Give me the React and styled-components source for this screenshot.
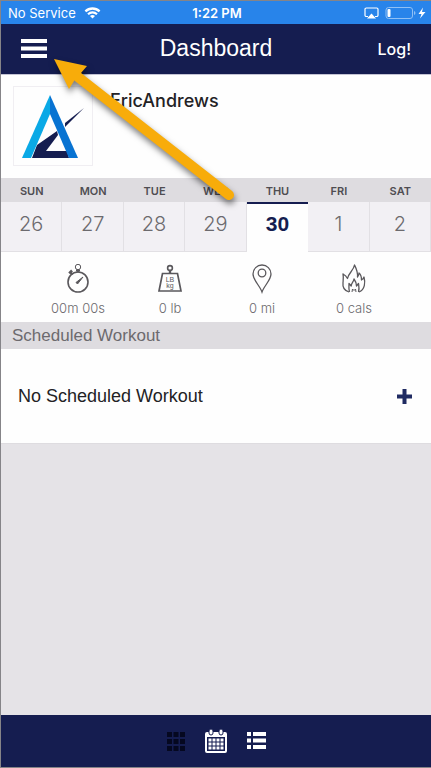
import React from 'react';
import styled, { createGlobalStyle } from 'styled-components';

const colors = {
    navy: '#151d50',
    blue: '#2884ea',
    header: '#dedce0',
    cell: '#f2f0f4',
    page: '#e5e3e7',
    line: '#e2e0e4',
    text: '#6c6a6e',
};

const days = [
    { name: 'SUN', date: 26 },
    { name: 'MON', date: 27 },
    { name: 'TUE', date: 28 },
    { name: 'WED', date: 29 },
    { name: 'THU', date: 30, active: true },
    { name: 'FRI', date: 1 },
    { name: 'SAT', date: 2 },
];

const stats = [
    { label: '00m 00s', Icon: StopwatchIcon },
    { label: '0 lb', Icon: WeightIcon },
    { label: '0 mi', Icon: PinIcon },
    { label: '0 cals', Icon: FlameIcon },
];

export default function App() {
    return (
        <Screen>
            <GlobalStyle />
            <StatusBar>
                <Carrier>
                    No Service
                    <WifiIcon />
                </Carrier>
                <Clock>1:22 PM</Clock>
                <StatusIcons>
                    <AirplayIcon />
                    <BatteryIcon />
                </StatusIcons>
            </StatusBar>
            <NavBar>
                <MenuButton type="button" aria-label="Menu">
                    <MenuIcon />
                </MenuButton>
                <Title>Dashboard</Title>
                <LogButton type="button">Log!</LogButton>
            </NavBar>
            <Profile>
                <Avatar>
                    <Logo />
                </Avatar>
                <UserName>EricAndrews</UserName>
            </Profile>
            <Week>
                {days.map((day) => (
                    <Day key={day.name}>
                        <DayName>{day.name}</DayName>
                        <DateButton type="button" $active={day.active}>
                            {day.date}
                        </DateButton>
                    </Day>
                ))}
            </Week>
            <Stats>
                {stats.map(({ label, Icon }) => (
                    <Stat key={label}>
                        <Icon />
                        {label}
                    </Stat>
                ))}
            </Stats>
            <SectionTitle>Scheduled Workout</SectionTitle>
            <Workout>
                No Scheduled Workout
                <AddButton type="button" aria-label="Add workout">
                    <PlusIcon />
                </AddButton>
            </Workout>
            <TabBar>
                <TabButton type="button" aria-label="Grid">
                    <GridIcon />
                </TabButton>
                <TabButton type="button" aria-label="Calendar">
                    <CalendarIcon />
                </TabButton>
                <TabButton type="button" aria-label="List">
                    <ListIcon />
                </TabButton>
            </TabBar>
            <Pointer />
        </Screen>
    );
}

function WifiIcon() {
    return (
        <svg width="17" height="12" viewBox="0 0 17 12" fill="none" stroke="#fff">
            <path d="M1.4 4.4a10.2 10.2 0 0 1 14.2 0" strokeWidth="2.3" />
            <path d="M4 7.2a6.5 6.5 0 0 1 9 0" strokeWidth="2.1" />
            <path d="M8.5 11.6 6 9.1a3.6 3.6 0 0 1 5 0z" fill="#fff" stroke="none" />
        </svg>
    );
}

function AirplayIcon() {
    return (
        <svg width="15" height="12" viewBox="0 0 15 12">
            <path
                d="M4 9.5H2.3A1.3 1.3 0 0 1 1 8.2V2.3A1.3 1.3 0 0 1 2.3 1h10.4A1.3 1.3 0 0 1 14 2.3v5.9a1.3 1.3 0 0 1-1.3 1.3H11"
                fill="none"
                stroke="#fff"
                strokeWidth="1.2"
            />
            <path d="M7.5 6.5 12 11.5H3z" fill="#fff" />
        </svg>
    );
}

function BatteryIcon() {
    return (
        <svg width="41" height="14" viewBox="0 0 41 14">
            <rect
                x="1"
                y="1.5"
                width="26.5"
                height="11"
                rx="2.5"
                fill="none"
                stroke="#8fc0f5"
            />
            <path d="M29 5v4q1.5-.6 1.5-2T29 5z" fill="#8fc0f5" />
            <rect x="2.5" y="3" width="3" height="8" rx="1" fill="#fff" />
            <path d="M38 1.500 33.500 8h3L35 12.500 40.500 6h-3.500z" fill="#fff" />
        </svg>
    );
}

function MenuIcon() {
    return (
        <svg width="26" height="20" viewBox="0 0 26 20" fill="#fff">
            <path d="M0 0h26v4H0zM0 7.500h26v4H0zM0 15h26v4H0z" />
        </svg>
    );
}

function Logo() {
    return (
        <svg width="78" height="78" viewBox="0 0 78 78">
            <path d="m70 21-19 15v4z" fill={colors.navy} />
            <path
                d="M43 44 23 58 18 71h37l-2-7H32l12-16z"
                fill={colors.navy}
            />
            <path d="M36 8 8 71h9l19-44z" fill="#0aa9e6" />
            <path d="m36 8 28 63h-9L36 27z" fill="#0873d2" />
        </svg>
    );
}

function StopwatchIcon() {
    return (
        <svg width="28" height="30" viewBox="0 0 28 30" fill="none" stroke="#5a585c">
            <circle cx="14" cy="18" r="10" strokeWidth="1.6" />
            <circle cx="14" cy="3" r="2.7" strokeWidth="1" />
            <path d="M14 5v3.500M12 6.500h4" strokeWidth="1.8" />
            <path d="m6 8 2.500 2.500" strokeWidth="2" />
            <path d="M5.200 9.300 8 6.500" strokeWidth="2.6" />
            <path d="m19 13-7 5.500 1.500 1.500z" fill="#5a585c" />
        </svg>
    );
}

function WeightIcon() {
    return (
        <svg width="28" height="30" viewBox="0 0 28 30">
            <g fill="none" stroke="#5a585c">
                <circle cx="14" cy="4" r="2.400" strokeWidth="1.6" />
                <path d="M14 6.500v3" strokeWidth="2.4" />
                <path d="M6.500 9.500h15L25 27H3z" strokeWidth="1.7" />
            </g>
            <g
                fill="#5a585c"
                fontFamily="'Liberation Sans', Arial, sans-serif"
                fontSize="7"
                textAnchor="middle"
            >
                <text x="14" y="18">LB</text>
                <text x="14" y="24">kg</text>
            </g>
        </svg>
    );
}

function PinIcon() {
    return (
        <svg width="28" height="30" viewBox="0 0 28 30" fill="none" stroke="#5a585c">
            <path
                d="M14 28C12 22 5 16 5 10a9 9 0 0 1 18 0c0 6-7 12-9 18z"
                strokeWidth="1.3"
            />
            <circle cx="14" cy="9" r="3.800" strokeWidth="1.3" />
        </svg>
    );
}

function FlameIcon() {
    return (
        <svg
            width="28"
            height="30"
            viewBox="0 0 28 30"
            fill="none"
            stroke="#5a585c"
            strokeWidth="1.3"
            strokeLinejoin="round"
        >
            <path d="M9 28C4 26.500 2.500 22.500 3 18.500c.3-3 .7-5 0-8.500 2 1 3.500 2.500 4.500 4.500C8 9.500 13.500 7 14.500 1c1.500 3 3.500 6.500 3 12 1-1 1.500-2.500 1.500-4 2 1.500 2.500 4 2.500 7 1.500-.5 2-1.500 2.500-3 1.500 5.500 1 12.500-5 15" />
            <path d="M9.500 28c-1-3-.5-5.500-.5-8.500l2.200 2.500c0-3 2.300-4 2.800-7 1.500 2 2.500 4 2.500 7l2-2.500c.5 3 1 5.500 0 8.500" />
            <path d="m12 28 .5-3 1.500 1.500 1.500-1.500.5 3" strokeWidth="1" />
        </svg>
    );
}

function PlusIcon() {
    return (
        <svg width="15" height="15" viewBox="0 0 15 15" fill="#202b62">
            <path d="M5.500 0h4v5.500H15v4H9.500V15h-4V9.500H0v-4h5.500z" />
        </svg>
    );
}

function GridIcon() {
    return (
        <svg width="18" height="20" viewBox="0 0 18 20" fill="#050820">
            <path d="M0 1h5v5H0zM6.500 1h5v5h-5zM13 1h5v5h-5zM0 8h5v5H0zM6.500 8h5v5h-5zM13 8h5v5h-5zM0 15h5v5H0zM6.500 15h5v5h-5zM13 15h5v5h-5z" />
        </svg>
    );
}

function CalendarIcon() {
    return (
        <svg width="22" height="24" viewBox="0 0 22 24">
            <rect x="1" y="4" width="20" height="19" rx="1" fill="none" stroke="#fff" strokeWidth="2" />
            <path d="M1 4h20v4H1z" fill="#fff" />
            <path
                d="M3.500 11h15M3.500 15h15M3.500 19h15"
                stroke="#fff"
                strokeWidth="3"
                strokeDasharray="3 1"
            />
            <rect x="4" y="0" width="4" height="6" rx="2" fill="#fff" stroke={colors.navy} />
            <rect x="14" y="0" width="4" height="6" rx="2" fill="#fff" stroke={colors.navy} />
        </svg>
    );
}

function ListIcon() {
    return (
        <svg width="20" height="18" viewBox="0 0 20 18" fill="#fff">
            <path d="M0 0h4v4H0zM6 0h13v4H6zM0 6.500h4v4H0zM6 6.500h13v4H6zM0 13h4v4H0zM6 13h13v4H6z" />
        </svg>
    );
}

function Pointer() {
    return (
        <PointerArrow viewBox="0 0 190 150" aria-hidden="true">
            <path
                d="m26 21 151 118"
                stroke="#f8ac0a"
                strokeWidth="10"
                strokeLinecap="round"
            />
            <path d="m2 3 33 7-6 7-7 8-5 8z" fill="#f8ac0a" />
        </PointerArrow>
    );
}

const GlobalStyle = createGlobalStyle`
    * {
        box-sizing: border-box;
    }

    body {
        margin: 0;
        font-family: 'Liberation Sans', Arial, sans-serif;
        color: #232225;
    }

    button {
        margin: 0;
        padding: 0;
        border: 0;
        background: none;
        color: inherit;
        font: inherit;
        cursor: pointer;
    }

    svg {
        display: block;
        flex: none;
    }
`;

const Screen = styled.div`
    position: relative;
    display: flex;
    flex-direction: column;
    min-height: 100vh;
    border: 1px solid #858488;
    border-right: 0;
    background: ${colors.page};
`;

const StatusBar = styled.div`
    display: grid;
    grid-template-columns: 1fr auto 1fr;
    align-items: center;
    height: 23px;
    padding: 0 5px 0 7px;
    background: ${colors.blue};
    color: #fff;
    font: 13px/16px Inter, 'Liberation Sans', sans-serif;
`;

const Carrier = styled.span`
    display: flex;
    align-items: center;
    gap: 8px;
`;

const Clock = styled.span`
    font-weight: 600;
`;

const StatusIcons = styled.span`
    display: flex;
    align-items: center;
    justify-content: flex-end;
    gap: 6px;
`;

const NavBar = styled.header`
    display: grid;
    grid-template-columns: 1fr auto 1fr;
    align-items: center;
    height: 50px;
    padding: 0 20px;
    background: ${colors.navy};
    color: #fff;
`;

const MenuButton = styled.button`
    justify-self: start;
`;

const Title = styled.h1`
    margin: 0;
    padding-bottom: 2px;
    font-size: 23px;
    font-weight: 400;
    line-height: 28px;
`;

const LogButton = styled.button`
    justify-self: end;
    font: 500 16px/20px Inter, 'Liberation Sans', sans-serif;
`;

const Profile = styled.section`
    display: flex;
    gap: 17px;
    padding: 11px 12px 12px;
    border-top: 1px solid #c3c3d3;
    background: #fefefe;
`;

const Avatar = styled.div`
    width: 80px;
    height: 80px;
    border: 1px solid #f0eef2;
`;

const UserName = styled.h2`
    margin: 4px 0 0;
    font: 500 18px/22px Inter, 'Liberation Sans', sans-serif;
`;

const Week = styled.div`
    display: grid;
    grid-template-columns: repeat(7, 1fr);
`;

const Day = styled.div`
    display: flex;
    flex-direction: column;
    text-align: center;
`;

const DayName = styled.span`
    height: 24px;
    background: ${colors.header};
    color: #4f4d52;
    font: 600 11px/26px Inter, 'Liberation Sans', sans-serif;
`;

const DateButton = styled.button`
    height: 50px;
    border-top: ${(p) => (p.$active ? `2px solid ${colors.navy}` : '0')};
    border-right: ${(p) => (p.$active ? '0' : `1px solid ${colors.line}`)};
    border-bottom: ${(p) => (p.$active ? '0' : `1px solid ${colors.line}`)};
    padding-bottom: ${(p) => (p.$active ? '8px' : '6px')};
    background: ${(p) => (p.$active ? '#fefefe' : colors.cell)};
    color: ${(p) => (p.$active ? colors.navy : colors.text)};
    font-family: ${(p) =>
        p.$active ? "'Liberation Sans', sans-serif" : 'Inter, sans-serif'};
    font-size: ${(p) => (p.$active ? '21px' : '20px')};
    font-weight: ${(p) => (p.$active ? '700' : '300')};
`;

const Stats = styled.div`
    display: grid;
    grid-template-columns: repeat(4, 1fr);
    padding: 12px 31px 5px;
    background: #fefefe;
`;

const Stat = styled.div`
    display: flex;
    flex-direction: column;
    align-items: center;
    gap: 5px;
    color: ${colors.text};
    font: 300 13px/18px Inter, 'Liberation Sans', sans-serif;
`;

const SectionTitle = styled.h2`
    margin: 0;
    padding: 0 11px;
    background: ${colors.header};
    color: ${colors.text};
    font-size: 17px;
    font-weight: 400;
    line-height: 27px;
`;

const Workout = styled.div`
    display: flex;
    align-items: center;
    justify-content: space-between;
    height: 95px;
    padding: 0 19px 0 17px;
    border-bottom: 1px solid ${colors.header};
    background: #fefefe;
    font-size: 18px;
`;

const AddButton = styled.button`
    display: block;
`;

const TabBar = styled.nav`
    display: flex;
    align-items: center;
    justify-content: center;
    gap: 20px;
    height: 52px;
    margin-top: auto;
    padding: 0 0 1px 1px;
    background: ${colors.navy};
`;

const TabButton = styled.button`
    display: block;
`;

const PointerArrow = styled.svg`
    position: absolute;
    top: 55px;
    left: 51px;
    width: 190px;
    height: 150px;
    filter: drop-shadow(1px 4px 3px rgba(0, 0, 0, 0.5));
    pointer-events: none;
`;
